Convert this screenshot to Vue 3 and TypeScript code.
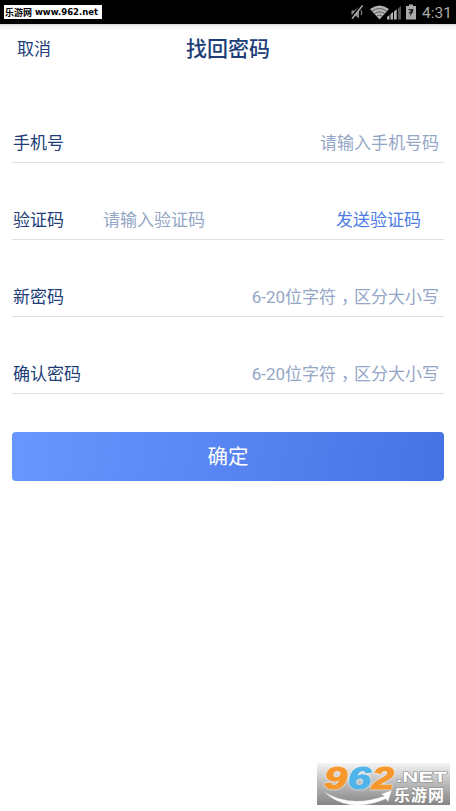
<script setup lang="ts">
interface Field {
  label: string
  hint: string
  tail?: string
  action?: string
}

const fields: Field[] = [
  { label: '手机号', hint: '请输入手机号码' },
  { label: '验证码', hint: '请输入验证码', action: '发送验证码' },
  { label: '新密码', hint: '6-20位字符', tail: '区分大小写' },
  { label: '确认密码', hint: '6-20位字符', tail: '区分大小写' },
]
</script>

<template>
  <div class="screen">
    <div class="status">
      <span class="site"><span class="site-cn">乐游网</span><span class="site-url">www.962.net</span></span>
      <div class="indicators">
        <svg class="mute" width="14" height="16" viewBox="0 0 14 16">
          <path d="M1.500 6.500h3L9 2.500v12L4.500 11h-3z" fill="#8a8a8a" />
          <path d="M11 6q1.500 2.500 0 5" fill="none" stroke="#777" stroke-width="1.200" />
          <path d="M11.300 1L1 13.500" stroke="#000" stroke-width="1.600" />
          <path d="M12.600 1.500L2 14.800" stroke="#aaa" stroke-width="1.500" />
        </svg>
        <svg class="wifi" width="19" height="15" viewBox="0 0 19 15">
          <path d="M9.500 14.500L0 4Q9.500-3 19 4z" fill="#b4b4b4" />
          <path d="M2.200 6.200Q9.500.8 16.800 6.200M4.300 8.800Q9.500 4.900 14.700 8.800M6.500 11.200Q9.500 9 12.500 11.200" fill="none" stroke="#444" stroke-width=".8" />
        </svg>
        <svg class="signal" width="15" height="15" viewBox="0 0 15 15">
          <path d="M0 14.500V12l2.500-2v4.500zM3.500 14.500V9L6 7v7.500zM7 14.500V6.500l2.700-2.300v10.300z" fill="#b4b4b4" />
          <path d="M11 14.500V3.500L14 1v13.500z" fill="#555" />
        </svg>
        <svg class="battery" width="10" height="16" viewBox="0 0 10 16">
          <path d="M0 2h3V.5h4V2h3v13.500H0z" fill="#aaa" />
          <path d="M2.500 5H7.500L6.800 8.500 3 13.500 4.800 9.500H2.300L5.200 6.300H2.500z" fill="#222" />
        </svg>
        <span class="clock">4:31</span>
      </div>
    </div>

    <header class="bar">
      <span class="cancel">取消</span>
      <h1 class="title">找回密码</h1>
      <span />
    </header>

    <form class="form" @submit.prevent>
      <div v-for="field in fields" :key="field.label" class="row" :class="{ verify: field.action }">
        <span class="label">{{ field.label }}</span>
        <span class="hint">{{ field.hint }}<template v-if="field.tail"><span class="comma">，</span>{{ field.tail }}</template></span>
        <span v-if="field.action" class="send">{{ field.action }}</span>
      </div>
      <button class="submit" type="submit">确定</button>
    </form>

    <div class="mark">
      <svg width="133" height="42" viewBox="0 0 133 42">
        <defs>
          <linearGradient id="markShade" x1="0" y1="0" x2="0" y2="1">
            <stop offset="0" stop-color="#f4f4f4" />
            <stop offset=".4" stop-color="#c4c4c4" />
            <stop offset="1" stop-color="#858585" />
          </linearGradient>
        </defs>
        <rect width="133" height="42" fill="url(#markShade)" />
        <path d="M6 28Q32 45 67 33L64 31 75 27 71 39 69 36Q30 52 6 28z" fill="#fff" stroke="#999" stroke-width=".4" />
        <g class="digits">
          <text class="orange" x="7" y="25.500" textLength="23" lengthAdjust="spacingAndGlyphs">9</text>
          <text class="blue" x="31" y="25.500" textLength="23" lengthAdjust="spacingAndGlyphs">6</text>
          <text class="orange" x="55" y="25.500" textLength="22" lengthAdjust="spacingAndGlyphs">2</text>
        </g>
        <text class="net" x="79" y="19" textLength="51" lengthAdjust="spacingAndGlyphs">.NET</text>
        <text class="cn" x="77" y="38" textLength="50">乐游网</text>
      </svg>
    </div>
  </div>
</template>

<style>
body {
  background: #fff;
}
</style>

<style scoped>
.screen {
  position: relative;
  box-sizing: border-box;
  width: 456px;
  height: 811px;
  overflow: hidden;
  background: #fff;
  font-family: Roboto, "Noto Sans CJK SC", sans-serif;
  color: #203d78;
}
.status {
  display: flex;
  justify-content: space-between;
  height: 24px;
  background: #000;
}
.site {
  display: flex;
  align-items: center;
  box-sizing: border-box;
  width: 98px;
  height: 14px;
  margin: 5px 0 0 4px;
  padding-left: 1px;
  gap: 3px;
  background: #fff;
  color: #000;
  font-weight: 700;
  white-space: nowrap;
}
.site-cn {
  font-size: 9px;
}
.site-url {
  font: 700 8.500px "DejaVu Sans", sans-serif;
}
.indicators {
  display: flex;
  align-items: center;
  padding-right: 6px;
}
.mute {
  margin-right: 6px;
}
.signal {
  margin: 0 4px 0 -2px;
}
.battery {
  margin-right: 6px;
}
.clock {
  width: 28px;
  padding-top: 1px;
  font-size: 15.500px;
  line-height: 24px;
  color: #aaa;
  white-space: nowrap;
}
.bar {
  display: grid;
  grid-template-columns: 1fr auto 1fr;
  align-items: center;
  box-sizing: border-box;
  height: 48px;
  padding: 0 17px 2px;
  background: linear-gradient(#d4d4d4 0, #f3f3f3 2px, #fff 8px);
}
.cancel {
  font-size: 17px;
}
.title {
  margin: 0;
  font-size: 21px;
  font-weight: 500;
}
.form {
  display: flex;
  flex-direction: column;
  gap: 39px;
  padding: 53px 12px 0;
}
.row {
  display: flex;
  align-items: center;
  justify-content: space-between;
  box-sizing: border-box;
  height: 38px;
  padding: 0 5px 4px 1px;
  border-bottom: 1px solid #dce1e8;
  font-size: 17px;
  white-space: nowrap;
}
.hint {
  color: #94a6c5;
}
.comma {
  display: inline-block;
  box-sizing: border-box;
  width: 18px;
  padding-left: 5px;
  font-feature-settings: "halt";
}
.verify {
  display: grid;
  grid-template-columns: 90px 1fr auto;
  padding-right: 23px;
}
.send {
  color: #4c7de5;
}
.submit {
  height: 49px;
  margin: -1px 0 0;
  padding: 0 0 3px;
  border: 0;
  border-radius: 4px;
  background: linear-gradient(100deg, #6a96ff, #4573e3);
  color: #fff;
  font: 400 20.500px "Noto Sans CJK SC", sans-serif;
}
.mark {
  position: absolute;
  left: 317px;
  top: 763px;
  height: 42px;
}
.mark svg {
  display: block;
}
.digits {
  font: italic 700 31px "Liberation Sans", sans-serif;
  stroke-width: 1.200px;
  filter: drop-shadow(0 0 1px #fff);
}
.orange {
  fill: #f7982d;
  stroke: #f7982d;
}
.blue {
  fill: #50b4ea;
  stroke: #50b4ea;
}
.net {
  font: 700 15px "Liberation Sans", sans-serif;
  fill: #fff;
  stroke: #888;
  stroke-width: 1px;
  paint-order: stroke;
}
.cn {
  font: 700 16px "Noto Sans CJK SC", sans-serif;
  fill: #fff;
  stroke: #888;
  stroke-width: 1px;
  paint-order: stroke;
}
</style>
